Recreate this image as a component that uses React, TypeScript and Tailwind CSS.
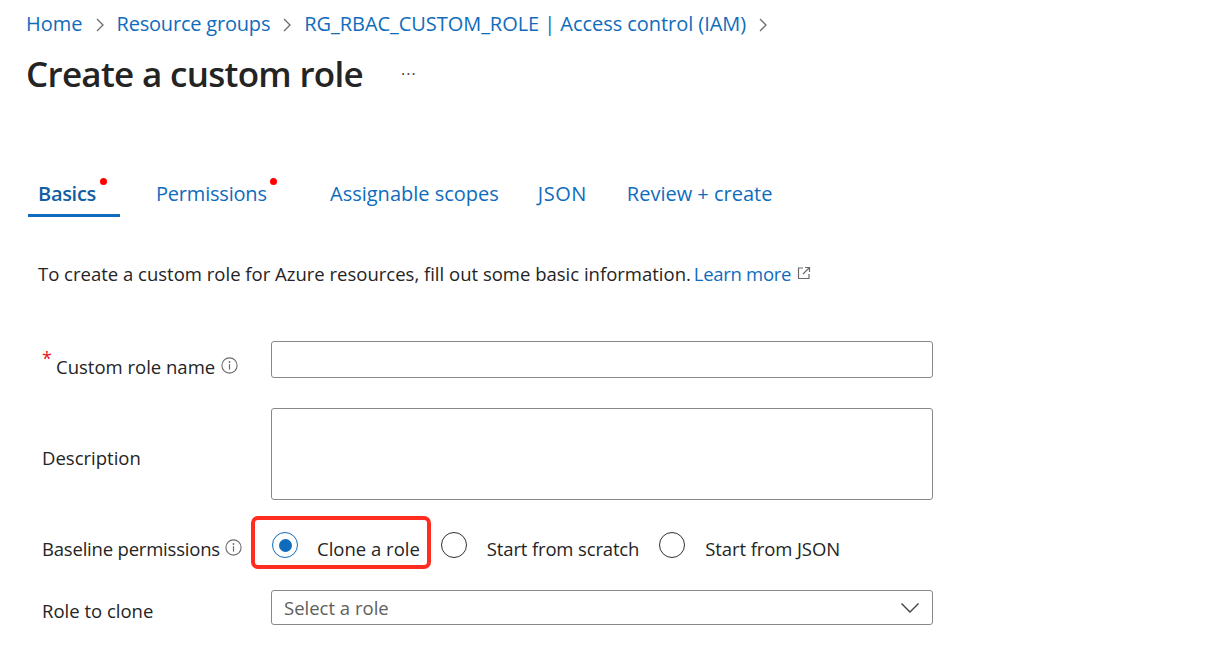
import React from "react";

const font = { fontFamily: '"Open Sans", "Noto Sans", Arial, sans-serif' };

function Chevron() {
  return (
    <svg width="10" height="16" viewBox="0 0 10 16" className="mx-[12px] mt-[2px] shrink-0">
      <path d="M2 2 L8 8 L2 14" fill="none" stroke="#6b6b6b" strokeWidth="1.3" />
    </svg>
  );
}

function Info() {
  return (
    <svg width="17" height="17" viewBox="0 0 17 17" className="block">
      <circle cx="8.5" cy="8.5" r="7.6" fill="none" stroke="#6b6b6b" strokeWidth="1.1" />
      <circle cx="8.5" cy="5" r="0.9" fill="#6b6b6b" />
      <path d="M8.5 7.2 V12.6" stroke="#6b6b6b" strokeWidth="1.2" />
    </svg>
  );
}

function Radio({ checked }: { checked?: boolean }) {
  return checked ? (
    <span className="block shrink-0 w-[26px] h-[26px] rounded-full border border-[#0f6cbd] flex items-center justify-center">
      <span className="block w-[13px] h-[13px] rounded-full bg-[#0f6cbd]" />
    </span>
  ) : (
    <span className="block shrink-0 w-[26px] h-[26px] rounded-full border-[1.5px] border-[#323130]" />
  );
}

export default function App() {
  return (
    <div className="w-[1214px] h-[654px] bg-white overflow-hidden text-[#323130]" style={font}>
      {/* breadcrumb */}
      <div className="flex items-center pl-[26px] pt-[12px] h-[35px] text-[20px] text-[#0f6cbd]">
        <span>Home</span>
        <Chevron />
        <span className="tracking-[-0.2px]">Resource groups</span>
        <Chevron />
        <span className="tracking-[-0.05px]">RG_RBAC_CUSTOM_ROLE | Access control (IAM)</span>
        <Chevron />
      </div>
      {/* title */}
      <div className="flex items-center pl-[26px] mt-[14px] h-[48px]">
        <h1 className="text-[35px] font-semibold text-[#242424] tracking-[-0.7px] leading-none">Create a custom role</h1>
        <span className="ml-[38px] text-[16px] text-[#424242] tracking-[1px] mt-[2px]">···</span>
      </div>
      {/* tabs */}
      <div className="flex pl-[28px] mt-[78px] h-[42px] text-[20px] text-[#0f6cbd]">
        <div className="relative w-[92px] pl-[10px] h-full flex items-center border-b-[3px] border-[#0f6cbd] pb-[1px]">
          <span className="font-semibold text-[#115ea3] tracking-[-0.3px]">Basics</span>
          <span className="absolute left-[72px] top-[3px] w-[7px] h-[7px] rounded-full bg-[#ff0000]" />
        </div>
        <div className="relative ml-[36px] w-[136px] h-full flex items-center pb-[4px]">
          <span className="tracking-[-0.2px]">Permissions</span>
          <span className="absolute left-[114px] top-[3px] w-[7px] h-[7px] rounded-full bg-[#ff0000]" />
        </div>
        <div className="ml-[38px] h-full flex items-center pb-[4px]">Assignable scopes</div>
        <div className="ml-[39px] h-full flex items-center pb-[4px] tracking-[0.5px]">JSON</div>
        <div className="ml-[40px] h-full flex items-center pb-[4px]">Review + create</div>
      </div>
      {/* description */}
      <div className="flex items-center pl-[38px] mt-[42px] h-[30px] text-[18.5px] text-[#242424]">
        <span>To create a custom role for Azure resources, fill out some basic information.</span>
        <span className="ml-[3px] text-[#0f6cbd] tracking-[-0.3px]">Learn more</span>
        <svg width="16" height="16" viewBox="0 0 16 16" className="ml-[5px] mb-[2px] shrink-0">
          <path d="M7 3 H2.5 V13.5 H13 V9" fill="none" stroke="#6b6b6b" strokeWidth="1.2" />
          <path d="M9 2.5 H13.5 V7 M13.5 2.5 L7 9" fill="none" stroke="#6b6b6b" strokeWidth="1.2" />
        </svg>
      </div>
      {/* form */}
      <div className="grid grid-cols-[229px_662px] pl-[42px] mt-[52px] text-[18.5px] text-[#242424]">
        <div className="flex items-center h-[37px] pt-[14px] relative">
          <span className="absolute left-0 top-[4px] text-[#e81123] text-[18px]">*</span>
          <span className="ml-[14px]">Custom role name</span>
          <span className="ml-[6px] mt-[-2px]"><Info /></span>
        </div>
        <div className="h-[37px] border border-[#8a8886] rounded-[3px]" />

        <div className="flex items-center h-[92px] mt-[30px] pt-[8px]">Description</div>
        <div className="h-[92px] mt-[30px] border border-[#8a8886] rounded-[3px]" />

        <div className="flex items-center h-[53px] mt-[16px] pt-[12px]">
          <span className="tracking-[-0.2px]">Baseline permissions</span>
          <span className="ml-[5px] mt-[-2px]"><Info /></span>
        </div>
        <div className="flex items-center h-[53px] mt-[16px] ml-[-20px]">
          <div className="flex items-center h-[53px] border-[4px] border-[#ff2d20] rounded-[7px] pl-[17px] pr-[7px]">
            <span className="mt-[5px]"><Radio checked /></span>
            <span className="ml-[19px] mt-[12px]">Clone a role</span>
          </div>
          <span className="ml-[10px] mt-[5px]"><Radio /></span>
          <span className="ml-[20px] mt-[12px] tracking-[-0.15px]">Start from scratch</span>
          <span className="ml-[20px] mt-[5px]"><Radio /></span>
          <span className="ml-[20px] mt-[12px] tracking-[-0.1px]">Start from JSON</span>
        </div>

        <div className="flex items-center h-[35px] mt-[21px] pt-[7px]">Role to clone</div>
        <div className="flex items-center justify-between h-[35px] mt-[21px] border border-[#8a8886] rounded-[3px] pl-[12px] pr-[12px]">
          <span className="text-[#605e5c]">Select a role</span>
          <svg width="20" height="12" viewBox="0 0 20 12" className="shrink-0">
            <path d="M1.5 1.5 L10 10 L18.5 1.5" fill="none" stroke="#424242" strokeWidth="1.4" />
          </svg>
        </div>
      </div>
    </div>
  );
}
